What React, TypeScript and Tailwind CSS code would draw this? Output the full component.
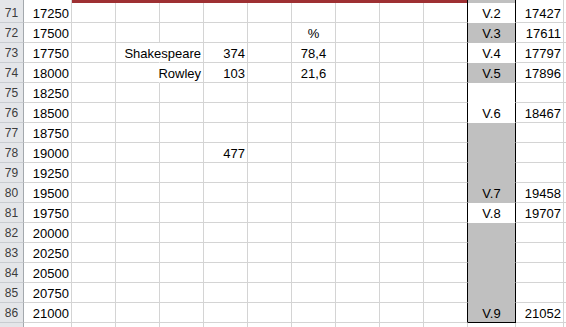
import React from "react";

type Row = {
  n: number;
  a: string;
  d?: string;
  e?: string;
  g?: string;
  k?: string;
  kFill?: boolean;
  l?: string;
};

const rows: Row[] = [
  { n: 71, a: "17250", k: "V.2", l: "17427" },
  { n: 72, a: "17500", g: "%", k: "V.3", kFill: true, l: "17611" },
  { n: 73, a: "17750", d: "Shakespeare", e: "374", g: "78,4", k: "V.4", l: "17797" },
  { n: 74, a: "18000", d: "Rowley", e: "103", g: "21,6", k: "V.5", kFill: true, l: "17896" },
  { n: 75, a: "18250" },
  { n: 76, a: "18500", k: "V.6", l: "18467" },
  { n: 77, a: "18750", kFill: true },
  { n: 78, a: "19000", e: "477", kFill: true },
  { n: 79, a: "19250", kFill: true },
  { n: 80, a: "19500", k: "V.7", kFill: true, l: "19458" },
  { n: 81, a: "19750", k: "V.8", l: "19707" },
  { n: 82, a: "20000", kFill: true },
  { n: 83, a: "20250", kFill: true },
  { n: 84, a: "20500", kFill: true },
  { n: 85, a: "20750", kFill: true },
  { n: 86, a: "21000", k: "V.9", kFill: true, l: "21052" },
];

const cell =
  "h-5 flex items-end pb-px leading-[15px] whitespace-nowrap border-b border-r border-[#d4d4d4]";

function SheetRow({ r }: { r: Row }) {
  const last = r.n === 86;
  const kBorder = last ? "border-b-black" : r.kFill ? "border-b-[#c0c0c0]" : "border-b-white";
  // B..J
  const mid = ["", "", r.d, r.e, "", r.g, "", "", ""];
  return (
    <>
      {/* 행 번호 */}
      <div className="h-5 flex items-end justify-center pb-px leading-[15px] text-[12px] text-[#3c3c3c] bg-[#e4e6e9] border-b border-b-[#c8ccd0] border-r border-r-[#a3a8ad]">
        {r.n}
      </div>
      <div className={`${cell} justify-end pr-[2px]`}>{r.a}</div>
      {mid.map((v, i) => {
        const overflowLeft = i === 1 && !!r.d;
        return (
          <div
            key={i}
            className={`${cell} ${i === 5 ? "justify-center" : "justify-end pr-[2px]"} ${
              i === 8 ? "border-r-black" : ""
            } ${overflowLeft ? "border-r-white" : ""}`}
          >
            {v}
          </div>
        );
      })}
      <div
        className={`h-5 flex items-end justify-center pb-px leading-[15px] border-b border-r border-r-black ${kBorder} ${
          r.kFill ? "bg-[#c0c0c0]" : "bg-white"
        }`}
      >
        {r.k}
      </div>
      <div className={`${cell} justify-end pr-[2px]`}>{r.l}</div>
      <div className="h-5 border-b border-[#d4d4d4]" />
    </>
  );
}

export default function App() {
  return (
    <div className="w-[566px] h-[327px] overflow-hidden bg-white text-black text-[13px] font-['Liberation_Sans',Arial,sans-serif]">
      <div className="grid grid-cols-[24px_48px_repeat(9,44px)_48px_48px_1fr]">
        {/* 위쪽: 70행 끝부분 (빨간 테두리) */}
        <div className="h-[3px] bg-[#e4e6e9] border-r border-r-[#a3a8ad]" />
        <div className="h-[3px] border-r border-[#d4d4d4]" />
        <div className="col-span-9 h-[3px] bg-[#9e3033] border-r border-r-black" />
        <div className="h-[3px] bg-[#c0c0c0] border-r border-r-black" />
        <div className="h-[3px] border-r border-[#d4d4d4]" />
        <div className="h-[3px]" />

        {rows.map((r) => (
          <SheetRow key={r.n} r={r} />
        ))}

        {/* 87행 (잘림) */}
        <div className="h-1 bg-[#e4e6e9] border-r border-r-[#a3a8ad]" />
        {Array.from({ length: 12 }).map((_, i) => (
          <div key={i} className="h-1 border-r border-[#d4d4d4]" />
        ))}
        <div className="h-1" />
      </div>
    </div>
  );
}
